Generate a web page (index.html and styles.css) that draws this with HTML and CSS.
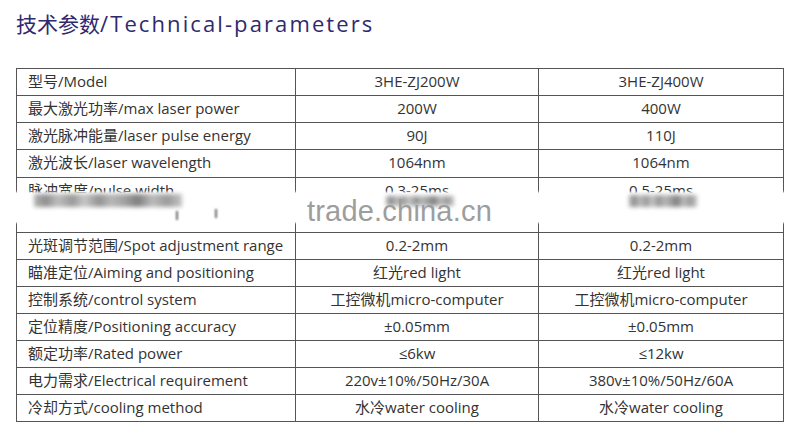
FILE: index.html
```html
<!DOCTYPE html>
<html lang="zh">
<head>
<meta charset="utf-8">
<link rel="stylesheet" href="styles.css">
</head>
<body>
<div class="page">
  <h1 class="title"><span class="title-cn">技术参数</span><span class="title-en">/Technical-parameters</span></h1>
  <div class="table-wrap">
    <table class="spec">
      <colgroup>
        <col class="c1"><col class="c2"><col class="c3">
      </colgroup>
      <tr><td>型号/Model</td><td>3HE-ZJ200W</td><td>3HE-ZJ400W</td></tr>
      <tr><td>最大激光功率/max laser power</td><td>200W</td><td>400W</td></tr>
      <tr><td>激光脉冲能量/laser pulse energy</td><td>90J</td><td>110J</td></tr>
      <tr class="r28"><td>激光波长/laser wavelength</td><td>1064nm</td><td>1064nm</td></tr>
      <tr class="double"><td>脉冲宽度/pulse width</td><td>0.3-25ms</td><td>0.5-25ms</td></tr>
      <tr><td>光斑调节范围/Spot adjustment range</td><td>0.2-2mm</td><td>0.2-2mm</td></tr>
      <tr><td>瞄准定位/Aiming and positioning</td><td>红光red light</td><td>红光red light</td></tr>
      <tr><td>控制系统/control system</td><td>工控微机micro-computer</td><td>工控微机micro-computer</td></tr>
      <tr><td>定位精度/Positioning accuracy</td><td>±0.05mm</td><td>±0.05mm</td></tr>
      <tr><td>额定功率/Rated power</td><td>≤6kw</td><td>≤12kw</td></tr>
      <tr><td>电力需求/Electrical requirement</td><td>220v±10%/50Hz/30A</td><td>380v±10%/50Hz/60A</td></tr>
      <tr><td>冷却方式/cooling method</td><td>水冷water cooling</td><td>水冷water cooling</td></tr>
    </table>
    <div class="band">
      <span class="smudge s1"></span>
      <span class="smudge s2"></span>
      <span class="smudge s3"></span>
      <span class="tick t1"></span>
      <span class="tick t2"></span>
      <span class="watermark">trade.china.cn</span>
    </div>
  </div>
</div>
</body>
</html>
```
FILE: styles.css
```css
html, body {
  margin: 0;
  padding: 0;
  background: #ffffff;
}
.page {
  width: 800px;
  height: 436px;
  overflow: hidden;
  padding: 5px 0 0 16px;
  box-sizing: border-box;
}
.title {
  margin: 0;
  font-family: "Open Sans", "Noto Sans CJK SC", sans-serif;
  font-weight: 400;
  line-height: 30px;
  height: 30px;
  color: #2f2a70;
  white-space: nowrap;
}
.title-cn {
  font-family: "Noto Sans CJK SC", sans-serif;
  font-size: 21px;
}
.title-en {
  font-size: 22px;
  letter-spacing: 2.1px;
}
.table-wrap {
  position: relative;
  margin-top: 33px;
  width: 767px;
}
.spec {
  border-collapse: collapse;
  table-layout: fixed;
  width: 767px;
  font-family: "Open Sans", "Noto Sans CJK SC", sans-serif;
  font-size: 15px;
  color: #333333;
}
.c1 { width: 279px; }
.c2 { width: 243px; }
.c3 { width: 245px; }
.spec tr { height: 27px; }
.spec tr.r28 { height: 28px; }
.spec tr.double { height: 55px; }
.spec td {
  border: 1px solid #555555;
  padding: 0;
  line-height: 25px;
  vertical-align: top;
  text-align: center;
  white-space: nowrap;
}
.spec td:first-child {
  text-align: left;
  padding-left: 11px;
}
.band {
  position: absolute;
  left: -6px;
  top: 125px;
  width: 780px;
  height: 29px;
  background: #ffffff;
  box-shadow: 0 0 2px 1px #ffffff;
}
.smudge {
  position: absolute;
  background: linear-gradient(90deg,
    #9a9a9a 0%, #6a6a6a 8%, #a8a8a8 16%, #777777 26%, #b5b5b5 34%, #707070 44%,
    #a0a0a0 52%, #808080 62%, #555555 70%, #a5a5a5 80%, #7a7a7a 90%, #b0b0b0 100%);
  filter: blur(2px);
  opacity: 0.75;
}
.s1 { left: 24px; top: 1px; width: 148px; height: 13px; }
.s2 { left: 376px; top: 3px; width: 68px; height: 10px; }
.s3 { left: 619px; top: 2px; width: 68px; height: 12px; }
.tick {
  position: absolute;
  width: 2px;
  height: 9px;
  background: #6a6a6a;
  filter: blur(0.8px);
}
.t1 { left: 166px; top: 18px; }
.t2 { left: 205px; top: 16px; }
.watermark {
  position: absolute;
  left: 297px;
  top: 2px;
  font-family: "Liberation Sans", Arial, sans-serif;
  font-size: 29px;
  line-height: 32px;
  color: #9d9d9d;
  letter-spacing: 0.2px;
}
```
